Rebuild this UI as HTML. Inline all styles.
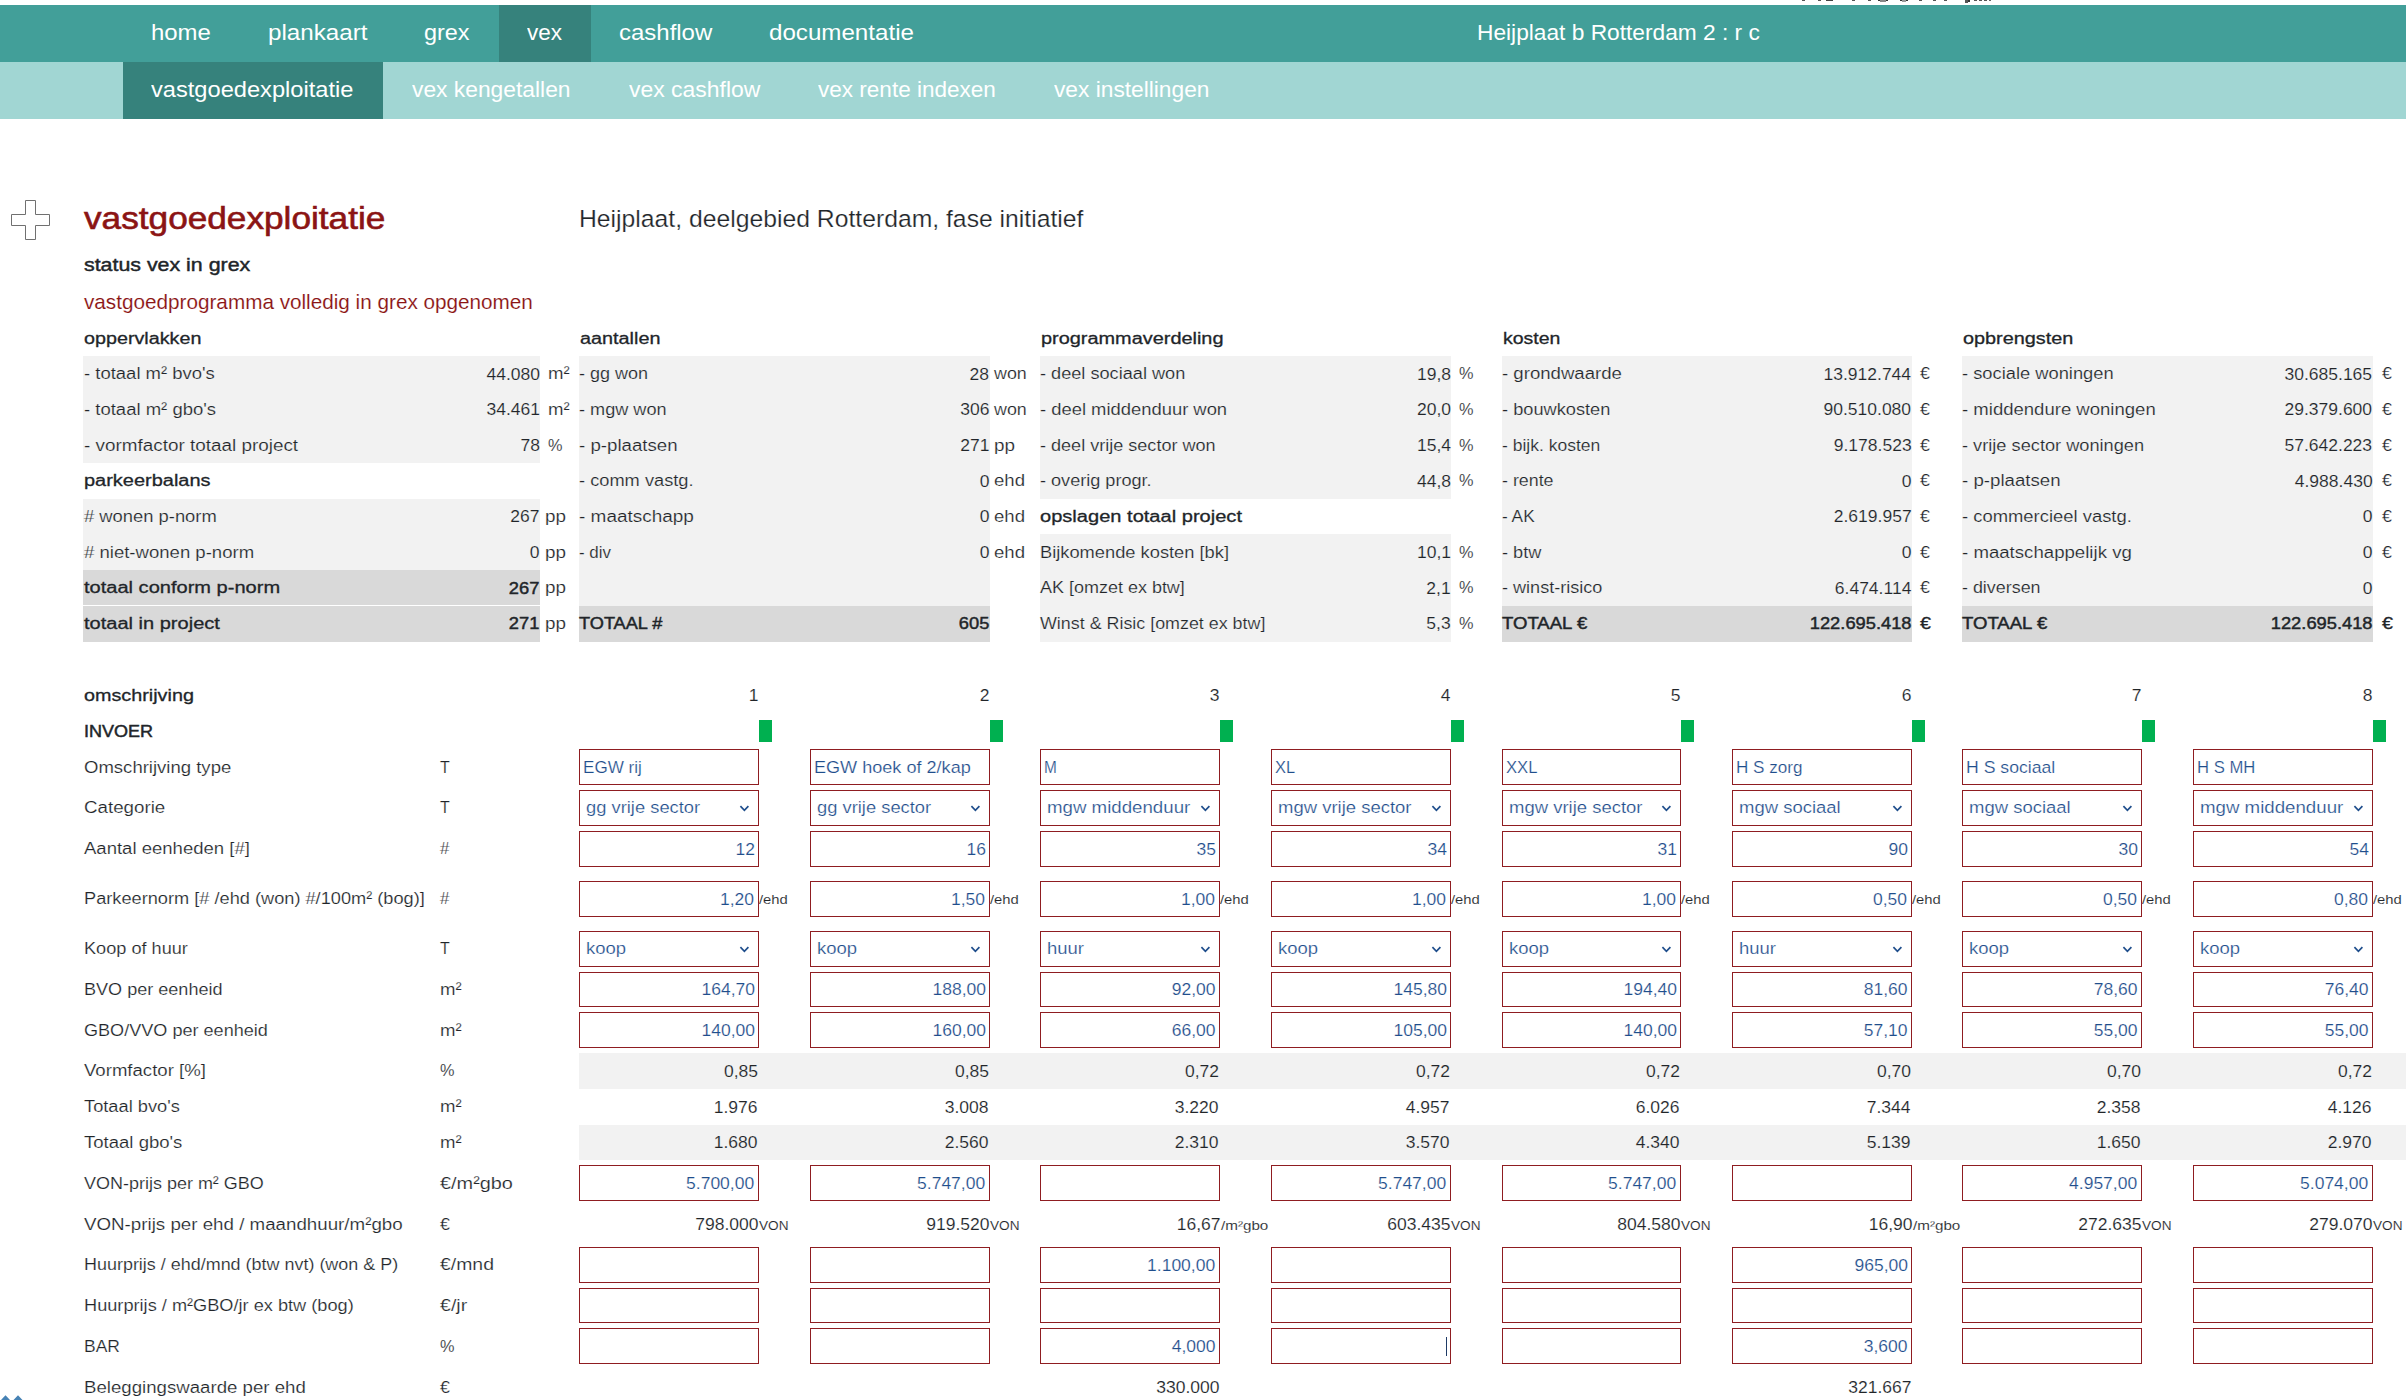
<!DOCTYPE html>
<html lang="nl"><head><meta charset="utf-8"><title>vastgoedexploitatie</title>
<style>
html,body{margin:0;padding:0;background:#fff}
body{width:2406px;height:1400px;position:relative;overflow:hidden;font-family:"Liberation Sans",sans-serif}
#p{position:absolute;left:0;top:0;width:2406px;height:1400px;overflow:hidden}
#p>div,#p>span,#p>svg{position:absolute;box-sizing:content-box}
#p>span{white-space:pre;line-height:1;transform-origin:0 0}
</style></head><body><div id="p">
<div style="left:0px;top:5px;width:2406px;height:57px;background:#429f99;"></div>
<div style="left:499px;top:5px;width:92px;height:57px;background:#36827c;"></div>
<div style="left:0px;top:62px;width:2406px;height:57px;background:#a1d6d3;"></div>
<div style="left:123px;top:62px;width:260px;height:57px;background:#36827c;"></div>
<span style="top:21.20px;font-size:22.7px;color:#fff;left:150.60px;transform:scaleX(1.0549);">home</span>
<span style="top:21.20px;font-size:22.7px;color:#fff;left:267.80px;transform:scaleX(1.0655);">plankaart</span>
<span style="top:21.20px;font-size:22.7px;color:#fff;left:424.40px;transform:scaleX(1.0326);">grex</span>
<span style="top:21.20px;font-size:22.7px;color:#fff;left:527.00px;transform:scaleX(0.9908);">vex</span>
<span style="top:21.20px;font-size:22.7px;color:#fff;left:619.20px;transform:scaleX(1.0564);">cashflow</span>
<span style="top:21.20px;font-size:22.7px;color:#fff;left:769.00px;transform:scaleX(1.0639);">documentatie</span>
<span style="top:21.20px;font-size:22.7px;color:#fff;left:1476.50px;transform:scaleX(1.0014);">Heijplaat b Rotterdam 2 : r c</span>
<span style="top:78.20px;font-size:22.7px;color:#fff;left:151.10px;transform:scaleX(1.0420);">vastgoedexploitatie</span>
<span style="top:78.20px;font-size:22.7px;color:#fff;left:411.70px;transform:scaleX(1.0054);">vex kengetallen</span>
<span style="top:78.20px;font-size:22.7px;color:#fff;left:628.50px;transform:scaleX(1.0119);">vex cashflow</span>
<span style="top:78.20px;font-size:22.7px;color:#fff;left:818.00px;transform:scaleX(0.9933);">vex rente indexen</span>
<span style="top:78.20px;font-size:22.7px;color:#fff;left:1054.00px;transform:scaleX(1.0019);">vex instellingen</span>
<span style="top:203.20px;font-size:31.2px;color:#8b1414;-webkit-text-stroke:0.6px #8b1414;left:84.30px;transform:scaleX(1.1287);">vastgoedexploitatie</span>
<span style="top:207.20px;font-size:24.3px;color:#212529;-webkit-text-stroke:0.22px #fff;left:579.00px;transform:scaleX(1.0177);">Heijplaat, deelgebied Rotterdam, fase initiatief</span>
<span style="top:255.20px;font-size:19.2px;color:#212529;-webkit-text-stroke:0.45px #212529;left:84.00px;transform:scaleX(1.1131);">status vex in grex</span>
<span style="top:292.20px;font-size:20.6px;color:#8b1414;-webkit-text-stroke:0.12px #fff;left:84.10px;transform:scaleX(1.0054);">vastgoedprogramma volledig in grex opgenomen</span>
<svg style="left:0;top:190px" width="60" height="60" viewBox="0 190 60 60"><path d="M25.5 200.5H35.5V214.5H49.5V225.5H35.5V239.5H25.5V225.5H11.5V214.5H25.5Z" fill="#fff" stroke="#707070" stroke-width="1"/></svg>
<div style="left:83px;top:356px;width:457px;height:107px;background:#f2f2f2;"></div>
<div style="left:83px;top:498.67px;width:457px;height:71.33px;background:#f2f2f2;"></div>
<div style="left:83px;top:570px;width:457px;height:35px;background:#d9d9d9;"></div>
<div style="left:83px;top:606px;width:457px;height:36px;background:#d9d9d9;"></div>
<div style="left:579px;top:356px;width:411px;height:250px;background:#f2f2f2;"></div>
<div style="left:579px;top:606px;width:411px;height:36px;background:#d9d9d9;"></div>
<div style="left:1040px;top:356px;width:411px;height:142.67px;background:#f2f2f2;"></div>
<div style="left:1040px;top:534.34px;width:411px;height:107.66px;background:#f2f2f2;"></div>
<div style="left:1502px;top:356px;width:410px;height:250px;background:#f2f2f2;"></div>
<div style="left:1502px;top:606px;width:410px;height:36px;background:#d9d9d9;"></div>
<div style="left:1962px;top:356px;width:411px;height:250px;background:#f2f2f2;"></div>
<div style="left:1962px;top:606px;width:411px;height:36px;background:#d9d9d9;"></div>
<span style="top:330.20px;font-size:17.3px;color:#212529;-webkit-text-stroke:0.3px #212529;left:83.90px;transform:scaleX(1.1418);">oppervlakken</span>
<span style="top:330.20px;font-size:17.3px;color:#212529;-webkit-text-stroke:0.3px #212529;left:579.80px;transform:scaleX(1.1464);">aantallen</span>
<span style="top:330.20px;font-size:17.3px;color:#212529;-webkit-text-stroke:0.3px #212529;left:1040.90px;transform:scaleX(1.1515);">programmaverdeling</span>
<span style="top:330.20px;font-size:17.3px;color:#212529;-webkit-text-stroke:0.3px #212529;left:1502.80px;transform:scaleX(1.1281);">kosten</span>
<span style="top:330.20px;font-size:17.3px;color:#212529;-webkit-text-stroke:0.3px #212529;left:1963.00px;transform:scaleX(1.1488);">opbrengsten</span>
<span style="top:365.20px;font-size:17.3px;color:#212529;-webkit-text-stroke:0.2px #f2f2f2;left:84.20px;transform:scaleX(1.0692);">- totaal m² bvo&#x27;s</span>
<span style="top:366.20px;font-size:17px;color:#212529;-webkit-text-stroke:0.15px #f2f2f2;right:1866.40px;transform-origin:100% 0;transform:scaleX(1.0294);">44.080</span>
<span style="top:365.20px;font-size:17.3px;color:#212529;-webkit-text-stroke:0.2px #fff;left:548.30px;transform:scaleX(1.0757);">m²</span>
<span style="top:401.20px;font-size:17.3px;color:#212529;-webkit-text-stroke:0.2px #f2f2f2;left:84.20px;transform:scaleX(1.0705);">- totaal m² gbo&#x27;s</span>
<span style="top:401.20px;font-size:17px;color:#212529;-webkit-text-stroke:0.15px #f2f2f2;right:1866.40px;transform-origin:100% 0;transform:scaleX(1.0294);">34.461</span>
<span style="top:401.20px;font-size:17.3px;color:#212529;-webkit-text-stroke:0.2px #fff;left:548.30px;transform:scaleX(1.0757);">m²</span>
<span style="top:437.20px;font-size:17.3px;color:#212529;-webkit-text-stroke:0.2px #f2f2f2;left:84.20px;transform:scaleX(1.0926);">- vormfactor totaal project</span>
<span style="top:437.20px;font-size:17px;color:#212529;-webkit-text-stroke:0.15px #f2f2f2;right:1866.40px;transform-origin:100% 0;transform:scaleX(1.0294);">78</span>
<span style="top:437.20px;font-size:17.3px;color:#212529;-webkit-text-stroke:0.2px #fff;left:548.30px;transform:scaleX(0.9426);">%</span>
<span style="top:472.20px;font-size:17.3px;color:#212529;-webkit-text-stroke:0.3px #212529;left:84.20px;transform:scaleX(1.1556);">parkeerbalans</span>
<span style="top:508.20px;font-size:17.3px;color:#212529;-webkit-text-stroke:0.2px #f2f2f2;left:84.20px;transform:scaleX(1.0631);"># wonen p-norm</span>
<span style="top:508.20px;font-size:17px;color:#212529;-webkit-text-stroke:0.15px #f2f2f2;right:1866.40px;transform-origin:100% 0;transform:scaleX(1.0294);">267</span>
<span style="top:508.20px;font-size:17.3px;color:#212529;-webkit-text-stroke:0.2px #fff;left:544.50px;transform:scaleX(1.0913);">pp</span>
<span style="top:544.20px;font-size:17.3px;color:#212529;-webkit-text-stroke:0.2px #f2f2f2;left:84.20px;transform:scaleX(1.0733);"># niet-wonen p-norm</span>
<span style="top:544.20px;font-size:17px;color:#212529;-webkit-text-stroke:0.15px #f2f2f2;right:1866.40px;transform-origin:100% 0;transform:scaleX(1.0294);">0</span>
<span style="top:544.20px;font-size:17.3px;color:#212529;-webkit-text-stroke:0.2px #fff;left:544.50px;transform:scaleX(1.0913);">pp</span>
<span style="top:579.20px;font-size:17.3px;color:#212529;-webkit-text-stroke:0.3px #212529;left:84.20px;transform:scaleX(1.1600);">totaal conform p-norm</span>
<span style="top:580.20px;font-size:17px;color:#212529;-webkit-text-stroke:0.45px #212529;right:1866.40px;transform-origin:100% 0;transform:scaleX(1.0765);">267</span>
<span style="top:579.20px;font-size:17.3px;color:#212529;-webkit-text-stroke:0.2px #fff;left:544.50px;transform:scaleX(1.0913);">pp</span>
<span style="top:615.20px;font-size:17.3px;color:#212529;-webkit-text-stroke:0.3px #212529;left:84.20px;transform:scaleX(1.1592);">totaal in project</span>
<span style="top:615.20px;font-size:17px;color:#212529;-webkit-text-stroke:0.45px #212529;right:1866.40px;transform-origin:100% 0;transform:scaleX(1.0765);">271</span>
<span style="top:615.20px;font-size:17.3px;color:#212529;-webkit-text-stroke:0.2px #fff;left:544.50px;transform:scaleX(1.0913);">pp</span>
<span style="top:365.20px;font-size:17.3px;color:#212529;-webkit-text-stroke:0.2px #f2f2f2;left:579.10px;transform:scaleX(1.0399);">- gg won</span>
<span style="top:366.20px;font-size:17px;color:#212529;-webkit-text-stroke:0.15px #f2f2f2;right:1416.70px;transform-origin:100% 0;transform:scaleX(1.0294);">28</span>
<span style="top:365.20px;font-size:17.3px;color:#212529;-webkit-text-stroke:0.2px #fff;left:994.20px;transform:scaleX(1.0335);">won</span>
<span style="top:401.20px;font-size:17.3px;color:#212529;-webkit-text-stroke:0.2px #f2f2f2;left:579.10px;transform:scaleX(1.0486);">- mgw won</span>
<span style="top:401.20px;font-size:17px;color:#212529;-webkit-text-stroke:0.15px #f2f2f2;right:1416.70px;transform-origin:100% 0;transform:scaleX(1.0294);">306</span>
<span style="top:401.20px;font-size:17.3px;color:#212529;-webkit-text-stroke:0.2px #fff;left:994.20px;transform:scaleX(1.0335);">won</span>
<span style="top:437.20px;font-size:17.3px;color:#212529;-webkit-text-stroke:0.2px #f2f2f2;left:579.10px;transform:scaleX(1.0804);">- p-plaatsen</span>
<span style="top:437.20px;font-size:17px;color:#212529;-webkit-text-stroke:0.15px #f2f2f2;right:1416.70px;transform-origin:100% 0;transform:scaleX(1.0294);">271</span>
<span style="top:437.20px;font-size:17.3px;color:#212529;-webkit-text-stroke:0.2px #fff;left:994.20px;transform:scaleX(1.0913);">pp</span>
<span style="top:472.20px;font-size:17.3px;color:#212529;-webkit-text-stroke:0.2px #f2f2f2;left:579.10px;transform:scaleX(1.0559);">- comm vastg.</span>
<span style="top:473.20px;font-size:17px;color:#212529;-webkit-text-stroke:0.15px #f2f2f2;right:1416.70px;transform-origin:100% 0;transform:scaleX(1.0294);">0</span>
<span style="top:472.20px;font-size:17.3px;color:#212529;-webkit-text-stroke:0.2px #fff;left:994.20px;transform:scaleX(1.0740);">ehd</span>
<span style="top:508.20px;font-size:17.3px;color:#212529;-webkit-text-stroke:0.2px #f2f2f2;left:579.10px;transform:scaleX(1.0972);">- maatschapp</span>
<span style="top:508.20px;font-size:17px;color:#212529;-webkit-text-stroke:0.15px #f2f2f2;right:1416.70px;transform-origin:100% 0;transform:scaleX(1.0294);">0</span>
<span style="top:508.20px;font-size:17.3px;color:#212529;-webkit-text-stroke:0.2px #fff;left:994.20px;transform:scaleX(1.0740);">ehd</span>
<span style="top:544.20px;font-size:17.3px;color:#212529;-webkit-text-stroke:0.2px #f2f2f2;left:579.10px;transform:scaleX(0.9791);">- div</span>
<span style="top:544.20px;font-size:17px;color:#212529;-webkit-text-stroke:0.15px #f2f2f2;right:1416.70px;transform-origin:100% 0;transform:scaleX(1.0294);">0</span>
<span style="top:544.20px;font-size:17.3px;color:#212529;-webkit-text-stroke:0.2px #fff;left:994.20px;transform:scaleX(1.0740);">ehd</span>
<span style="top:615.20px;font-size:16.3px;color:#212529;-webkit-text-stroke:0.45px #212529;left:579.10px;transform:scaleX(1.1150);">TOTAAL #</span>
<span style="top:615.20px;font-size:17px;color:#212529;-webkit-text-stroke:0.45px #212529;right:1416.70px;transform-origin:100% 0;transform:scaleX(1.0765);">605</span>
<span style="top:365.20px;font-size:17.3px;color:#212529;-webkit-text-stroke:0.2px #f2f2f2;left:1040.20px;transform:scaleX(1.0500);">- deel sociaal won</span>
<span style="top:366.20px;font-size:17px;color:#212529;-webkit-text-stroke:0.15px #f2f2f2;right:955.40px;transform-origin:100% 0;transform:scaleX(1.0294);">19,8</span>
<span style="top:365.20px;font-size:17.3px;color:#212529;-webkit-text-stroke:0.2px #fff;left:1459.40px;transform:scaleX(0.9426);">%</span>
<span style="top:401.20px;font-size:17.3px;color:#212529;-webkit-text-stroke:0.2px #f2f2f2;left:1040.20px;transform:scaleX(1.0643);">- deel middenduur won</span>
<span style="top:401.20px;font-size:17px;color:#212529;-webkit-text-stroke:0.15px #f2f2f2;right:955.40px;transform-origin:100% 0;transform:scaleX(1.0294);">20,0</span>
<span style="top:401.20px;font-size:17.3px;color:#212529;-webkit-text-stroke:0.2px #fff;left:1459.40px;transform:scaleX(0.9426);">%</span>
<span style="top:437.20px;font-size:17.3px;color:#212529;-webkit-text-stroke:0.2px #f2f2f2;left:1040.20px;transform:scaleX(1.0448);">- deel vrije sector won</span>
<span style="top:437.20px;font-size:17px;color:#212529;-webkit-text-stroke:0.15px #f2f2f2;right:955.40px;transform-origin:100% 0;transform:scaleX(1.0294);">15,4</span>
<span style="top:437.20px;font-size:17.3px;color:#212529;-webkit-text-stroke:0.2px #fff;left:1459.40px;transform:scaleX(0.9426);">%</span>
<span style="top:472.20px;font-size:17.3px;color:#212529;-webkit-text-stroke:0.2px #f2f2f2;left:1040.20px;transform:scaleX(1.0466);">- overig progr.</span>
<span style="top:473.20px;font-size:17px;color:#212529;-webkit-text-stroke:0.15px #f2f2f2;right:955.40px;transform-origin:100% 0;transform:scaleX(1.0294);">44,8</span>
<span style="top:472.20px;font-size:17.3px;color:#212529;-webkit-text-stroke:0.2px #fff;left:1459.40px;transform:scaleX(0.9426);">%</span>
<span style="top:544.20px;font-size:17.3px;color:#212529;-webkit-text-stroke:0.2px #f2f2f2;left:1040.20px;transform:scaleX(1.0578);">Bijkomende kosten [bk]</span>
<span style="top:544.20px;font-size:17px;color:#212529;-webkit-text-stroke:0.15px #f2f2f2;right:955.40px;transform-origin:100% 0;transform:scaleX(1.0294);">10,1</span>
<span style="top:544.20px;font-size:17.3px;color:#212529;-webkit-text-stroke:0.2px #fff;left:1459.40px;transform:scaleX(0.9426);">%</span>
<span style="top:579.20px;font-size:17.3px;color:#212529;-webkit-text-stroke:0.2px #f2f2f2;left:1040.20px;transform:scaleX(1.0401);">AK [omzet ex btw]</span>
<span style="top:580.20px;font-size:17px;color:#212529;-webkit-text-stroke:0.15px #f2f2f2;right:955.40px;transform-origin:100% 0;transform:scaleX(1.0294);">2,1</span>
<span style="top:579.20px;font-size:17.3px;color:#212529;-webkit-text-stroke:0.2px #fff;left:1459.40px;transform:scaleX(0.9426);">%</span>
<span style="top:615.20px;font-size:17.3px;color:#212529;-webkit-text-stroke:0.2px #f2f2f2;left:1040.20px;transform:scaleX(1.0338);">Winst &amp; Risic [omzet ex btw]</span>
<span style="top:615.20px;font-size:17px;color:#212529;-webkit-text-stroke:0.15px #f2f2f2;right:955.40px;transform-origin:100% 0;transform:scaleX(1.0294);">5,3</span>
<span style="top:615.20px;font-size:17.3px;color:#212529;-webkit-text-stroke:0.2px #fff;left:1459.40px;transform:scaleX(0.9426);">%</span>
<span style="top:508.20px;font-size:17.3px;color:#212529;-webkit-text-stroke:0.3px #212529;left:1040.20px;transform:scaleX(1.1615);">opslagen totaal project</span>
<span style="top:365.20px;font-size:17.3px;color:#212529;-webkit-text-stroke:0.2px #f2f2f2;left:1502.10px;transform:scaleX(1.0757);">- grondwaarde</span>
<span style="top:366.20px;font-size:17px;color:#212529;-webkit-text-stroke:0.15px #f2f2f2;right:494.70px;transform-origin:100% 0;transform:scaleX(1.0294);">13.912.744</span>
<span style="top:365.20px;font-size:17.3px;color:#212529;-webkit-text-stroke:0.2px #fff;left:1920.20px;transform:scaleX(1.0393);">€</span>
<span style="top:401.20px;font-size:17.3px;color:#212529;-webkit-text-stroke:0.2px #f2f2f2;left:1502.10px;transform:scaleX(1.0545);">- bouwkosten</span>
<span style="top:401.20px;font-size:17px;color:#212529;-webkit-text-stroke:0.15px #f2f2f2;right:494.70px;transform-origin:100% 0;transform:scaleX(1.0294);">90.510.080</span>
<span style="top:401.20px;font-size:17.3px;color:#212529;-webkit-text-stroke:0.2px #fff;left:1920.20px;transform:scaleX(1.0393);">€</span>
<span style="top:437.20px;font-size:17.3px;color:#212529;-webkit-text-stroke:0.2px #f2f2f2;left:1502.10px;transform:scaleX(1.0123);">- bijk. kosten</span>
<span style="top:437.20px;font-size:17px;color:#212529;-webkit-text-stroke:0.15px #f2f2f2;right:494.70px;transform-origin:100% 0;transform:scaleX(1.0294);">9.178.523</span>
<span style="top:437.20px;font-size:17.3px;color:#212529;-webkit-text-stroke:0.2px #fff;left:1920.20px;transform:scaleX(1.0393);">€</span>
<span style="top:472.20px;font-size:17.3px;color:#212529;-webkit-text-stroke:0.2px #f2f2f2;left:1502.10px;transform:scaleX(1.0320);">- rente</span>
<span style="top:473.20px;font-size:17px;color:#212529;-webkit-text-stroke:0.15px #f2f2f2;right:494.70px;transform-origin:100% 0;transform:scaleX(1.0294);">0</span>
<span style="top:472.20px;font-size:17.3px;color:#212529;-webkit-text-stroke:0.2px #fff;left:1920.20px;transform:scaleX(1.0393);">€</span>
<span style="top:508.20px;font-size:17.3px;color:#212529;-webkit-text-stroke:0.2px #f2f2f2;left:1502.10px;transform:scaleX(1.0003);">- AK</span>
<span style="top:508.20px;font-size:17px;color:#212529;-webkit-text-stroke:0.15px #f2f2f2;right:494.70px;transform-origin:100% 0;transform:scaleX(1.0294);">2.619.957</span>
<span style="top:508.20px;font-size:17.3px;color:#212529;-webkit-text-stroke:0.2px #fff;left:1920.20px;transform:scaleX(1.0393);">€</span>
<span style="top:544.20px;font-size:17.3px;color:#212529;-webkit-text-stroke:0.2px #f2f2f2;left:1502.10px;transform:scaleX(1.0510);">- btw</span>
<span style="top:544.20px;font-size:17px;color:#212529;-webkit-text-stroke:0.15px #f2f2f2;right:494.70px;transform-origin:100% 0;transform:scaleX(1.0294);">0</span>
<span style="top:544.20px;font-size:17.3px;color:#212529;-webkit-text-stroke:0.2px #fff;left:1920.20px;transform:scaleX(1.0393);">€</span>
<span style="top:579.20px;font-size:17.3px;color:#212529;-webkit-text-stroke:0.2px #f2f2f2;left:1502.10px;transform:scaleX(1.0456);">- winst-risico</span>
<span style="top:580.20px;font-size:17px;color:#212529;-webkit-text-stroke:0.15px #f2f2f2;right:494.70px;transform-origin:100% 0;transform:scaleX(1.0294);">6.474.114</span>
<span style="top:579.20px;font-size:17.3px;color:#212529;-webkit-text-stroke:0.2px #fff;left:1920.20px;transform:scaleX(1.0393);">€</span>
<span style="top:615.20px;font-size:16.3px;color:#212529;-webkit-text-stroke:0.45px #212529;left:1502.10px;transform:scaleX(1.1391);">TOTAAL €</span>
<span style="top:615.20px;font-size:17px;color:#212529;-webkit-text-stroke:0.45px #212529;right:494.70px;transform-origin:100% 0;transform:scaleX(1.0765);">122.695.418</span>
<span style="top:615.20px;font-size:17.3px;color:#212529;-webkit-text-stroke:0.3px #212529;left:1920.20px;transform:scaleX(1.1433);">€</span>
<span style="top:365.20px;font-size:17.3px;color:#212529;-webkit-text-stroke:0.2px #f2f2f2;left:1962.30px;transform:scaleX(1.0594);">- sociale woningen</span>
<span style="top:366.20px;font-size:17px;color:#212529;-webkit-text-stroke:0.15px #f2f2f2;right:33.60px;transform-origin:100% 0;transform:scaleX(1.0294);">30.685.165</span>
<span style="top:365.20px;font-size:17.3px;color:#212529;-webkit-text-stroke:0.2px #fff;left:2381.60px;transform:scaleX(1.0393);">€</span>
<span style="top:401.20px;font-size:17.3px;color:#212529;-webkit-text-stroke:0.2px #f2f2f2;left:1962.30px;transform:scaleX(1.0724);">- middendure woningen</span>
<span style="top:401.20px;font-size:17px;color:#212529;-webkit-text-stroke:0.15px #f2f2f2;right:33.60px;transform-origin:100% 0;transform:scaleX(1.0294);">29.379.600</span>
<span style="top:401.20px;font-size:17.3px;color:#212529;-webkit-text-stroke:0.2px #fff;left:2381.60px;transform:scaleX(1.0393);">€</span>
<span style="top:437.20px;font-size:17.3px;color:#212529;-webkit-text-stroke:0.2px #f2f2f2;left:1962.30px;transform:scaleX(1.0533);">- vrije sector woningen</span>
<span style="top:437.20px;font-size:17px;color:#212529;-webkit-text-stroke:0.15px #f2f2f2;right:33.60px;transform-origin:100% 0;transform:scaleX(1.0294);">57.642.223</span>
<span style="top:437.20px;font-size:17.3px;color:#212529;-webkit-text-stroke:0.2px #fff;left:2381.60px;transform:scaleX(1.0393);">€</span>
<span style="top:472.20px;font-size:17.3px;color:#212529;-webkit-text-stroke:0.2px #f2f2f2;left:1962.30px;transform:scaleX(1.0804);">- p-plaatsen</span>
<span style="top:473.20px;font-size:17px;color:#212529;-webkit-text-stroke:0.15px #f2f2f2;right:33.60px;transform-origin:100% 0;transform:scaleX(1.0294);">4.988.430</span>
<span style="top:472.20px;font-size:17.3px;color:#212529;-webkit-text-stroke:0.2px #fff;left:2381.60px;transform:scaleX(1.0393);">€</span>
<span style="top:508.20px;font-size:17.3px;color:#212529;-webkit-text-stroke:0.2px #f2f2f2;left:1962.30px;transform:scaleX(1.0653);">- commercieel vastg.</span>
<span style="top:508.20px;font-size:17px;color:#212529;-webkit-text-stroke:0.15px #f2f2f2;right:33.60px;transform-origin:100% 0;transform:scaleX(1.0294);">0</span>
<span style="top:508.20px;font-size:17.3px;color:#212529;-webkit-text-stroke:0.2px #fff;left:2381.60px;transform:scaleX(1.0393);">€</span>
<span style="top:544.20px;font-size:17.3px;color:#212529;-webkit-text-stroke:0.2px #f2f2f2;left:1962.30px;transform:scaleX(1.0780);">- maatschappelijk vg</span>
<span style="top:544.20px;font-size:17px;color:#212529;-webkit-text-stroke:0.15px #f2f2f2;right:33.60px;transform-origin:100% 0;transform:scaleX(1.0294);">0</span>
<span style="top:544.20px;font-size:17.3px;color:#212529;-webkit-text-stroke:0.2px #fff;left:2381.60px;transform:scaleX(1.0393);">€</span>
<span style="top:579.20px;font-size:17.3px;color:#212529;-webkit-text-stroke:0.2px #f2f2f2;left:1962.30px;transform:scaleX(1.0348);">- diversen</span>
<span style="top:580.20px;font-size:17px;color:#212529;-webkit-text-stroke:0.15px #f2f2f2;right:33.60px;transform-origin:100% 0;transform:scaleX(1.0294);">0</span>
<span style="top:615.20px;font-size:16.3px;color:#212529;-webkit-text-stroke:0.45px #212529;left:1962.30px;transform:scaleX(1.1391);">TOTAAL €</span>
<span style="top:615.20px;font-size:17px;color:#212529;-webkit-text-stroke:0.45px #212529;right:33.60px;transform-origin:100% 0;transform:scaleX(1.0765);">122.695.418</span>
<span style="top:615.20px;font-size:17.3px;color:#212529;-webkit-text-stroke:0.3px #212529;left:2381.60px;transform:scaleX(1.1433);">€</span>
<div style="left:579px;top:1053px;width:1827px;height:36px;background:#f2f2f2;"></div>
<div style="left:579px;top:1125px;width:1827px;height:35px;background:#f2f2f2;"></div>
<span style="top:687.20px;font-size:17.3px;color:#212529;-webkit-text-stroke:0.3px #212529;left:84.00px;transform:scaleX(1.1442);">omschrijving</span>
<span style="top:723.20px;font-size:16.3px;color:#212529;-webkit-text-stroke:0.45px #212529;left:84.00px;transform:scaleX(1.1073);">INVOER</span>
<span style="top:687.20px;font-size:17px;color:#212529;-webkit-text-stroke:0.15px #fff;right:1647.30px;transform-origin:100% 0;transform:scaleX(1.0294);">1</span>
<div style="left:759px;top:720px;width:13px;height:22px;background:#00b050;"></div>
<span style="top:687.20px;font-size:17px;color:#212529;-webkit-text-stroke:0.15px #fff;right:1416.30px;transform-origin:100% 0;transform:scaleX(1.0294);">2</span>
<div style="left:990px;top:720px;width:13px;height:22px;background:#00b050;"></div>
<span style="top:687.20px;font-size:17px;color:#212529;-webkit-text-stroke:0.15px #fff;right:1186.30px;transform-origin:100% 0;transform:scaleX(1.0294);">3</span>
<div style="left:1220px;top:720px;width:13px;height:22px;background:#00b050;"></div>
<span style="top:687.20px;font-size:17px;color:#212529;-webkit-text-stroke:0.15px #fff;right:955.30px;transform-origin:100% 0;transform:scaleX(1.0294);">4</span>
<div style="left:1451px;top:720px;width:13px;height:22px;background:#00b050;"></div>
<span style="top:687.20px;font-size:17px;color:#212529;-webkit-text-stroke:0.15px #fff;right:725.30px;transform-origin:100% 0;transform:scaleX(1.0294);">5</span>
<div style="left:1681px;top:720px;width:13px;height:22px;background:#00b050;"></div>
<span style="top:687.20px;font-size:17px;color:#212529;-webkit-text-stroke:0.15px #fff;right:494.30px;transform-origin:100% 0;transform:scaleX(1.0294);">6</span>
<div style="left:1912px;top:720px;width:13px;height:22px;background:#00b050;"></div>
<span style="top:687.20px;font-size:17px;color:#212529;-webkit-text-stroke:0.15px #fff;right:264.30px;transform-origin:100% 0;transform:scaleX(1.0294);">7</span>
<div style="left:2142px;top:720px;width:13px;height:22px;background:#00b050;"></div>
<span style="top:687.20px;font-size:17px;color:#212529;-webkit-text-stroke:0.15px #fff;right:33.30px;transform-origin:100% 0;transform:scaleX(1.0294);">8</span>
<div style="left:2373px;top:720px;width:13px;height:22px;background:#00b050;"></div>
<span style="top:759.20px;font-size:17.3px;color:#212529;-webkit-text-stroke:0.2px #fff;left:83.90px;transform:scaleX(1.0722);">Omschrijving type</span>
<span style="top:759.20px;font-size:17.3px;color:#212529;-webkit-text-stroke:0.2px #fff;left:440.00px;transform:scaleX(0.9274);">T</span>
<div style="left:579px;top:749px;width:178px;height:34px;border:1px solid #8f1d21;background:#fff"></div>
<span style="top:760.20px;font-size:16.6px;color:#1f4e8c;-webkit-text-stroke:0.2px #fff;left:583.00px;transform:scaleX(1.0303);">EGW rij</span>
<div style="left:810px;top:749px;width:178px;height:34px;border:1px solid #8f1d21;background:#fff"></div>
<span style="top:760.20px;font-size:16.6px;color:#1f4e8c;-webkit-text-stroke:0.2px #fff;left:814.00px;transform:scaleX(1.0894);">EGW hoek of 2/kap</span>
<div style="left:1040px;top:749px;width:178px;height:34px;border:1px solid #8f1d21;background:#fff"></div>
<span style="top:760.20px;font-size:16.6px;color:#1f4e8c;-webkit-text-stroke:0.2px #fff;left:1044.00px;transform:scaleX(0.9257);">M</span>
<div style="left:1271px;top:749px;width:178px;height:34px;border:1px solid #8f1d21;background:#fff"></div>
<span style="top:760.20px;font-size:16.6px;color:#1f4e8c;-webkit-text-stroke:0.2px #fff;left:1275.00px;transform:scaleX(0.9899);">XL</span>
<div style="left:1502px;top:749px;width:177px;height:34px;border:1px solid #8f1d21;background:#fff"></div>
<span style="top:760.20px;font-size:16.6px;color:#1f4e8c;-webkit-text-stroke:0.2px #fff;left:1506.00px;transform:scaleX(1.0039);">XXL</span>
<div style="left:1732px;top:749px;width:178px;height:34px;border:1px solid #8f1d21;background:#fff"></div>
<span style="top:760.20px;font-size:16.6px;color:#1f4e8c;-webkit-text-stroke:0.2px #fff;left:1736.00px;transform:scaleX(1.0298);">H S zorg</span>
<div style="left:1962px;top:749px;width:178px;height:34px;border:1px solid #8f1d21;background:#fff"></div>
<span style="top:760.20px;font-size:16.6px;color:#1f4e8c;-webkit-text-stroke:0.2px #fff;left:1966.00px;transform:scaleX(1.0636);">H S sociaal</span>
<div style="left:2193px;top:749px;width:178px;height:34px;border:1px solid #8f1d21;background:#fff"></div>
<span style="top:760.20px;font-size:16.6px;color:#1f4e8c;-webkit-text-stroke:0.2px #fff;left:2197.00px;transform:scaleX(1.0034);">H S MH</span>
<span style="top:799.20px;font-size:17.3px;color:#212529;-webkit-text-stroke:0.2px #fff;left:83.90px;transform:scaleX(1.0838);">Categorie</span>
<span style="top:799.20px;font-size:17.3px;color:#212529;-webkit-text-stroke:0.2px #fff;left:440.00px;transform:scaleX(0.9274);">T</span>
<div style="left:579px;top:790px;width:178px;height:34px;border:1px solid #8f1d21;background:#fff"></div>
<span style="top:800.20px;font-size:16.8px;color:#1f4e8c;-webkit-text-stroke:0.22px #fff;left:585.50px;transform:scaleX(1.0930);">gg vrije sector</span>
<svg style="left:738.5px;top:804.6px" width="11" height="8" viewBox="0 0 11 8"><path d="M1.4 1.2 L5.4 5.3 L9.4 1.2" fill="none" stroke="#1f4e8c" stroke-width="1.7"/></svg>
<div style="left:810px;top:790px;width:178px;height:34px;border:1px solid #8f1d21;background:#fff"></div>
<span style="top:800.20px;font-size:16.8px;color:#1f4e8c;-webkit-text-stroke:0.22px #fff;left:816.50px;transform:scaleX(1.0930);">gg vrije sector</span>
<svg style="left:969.5px;top:804.6px" width="11" height="8" viewBox="0 0 11 8"><path d="M1.4 1.2 L5.4 5.3 L9.4 1.2" fill="none" stroke="#1f4e8c" stroke-width="1.7"/></svg>
<div style="left:1040px;top:790px;width:178px;height:34px;border:1px solid #8f1d21;background:#fff"></div>
<span style="top:800.20px;font-size:16.8px;color:#1f4e8c;-webkit-text-stroke:0.22px #fff;left:1046.50px;transform:scaleX(1.1128);">mgw middenduur</span>
<svg style="left:1199.5px;top:804.6px" width="11" height="8" viewBox="0 0 11 8"><path d="M1.4 1.2 L5.4 5.3 L9.4 1.2" fill="none" stroke="#1f4e8c" stroke-width="1.7"/></svg>
<div style="left:1271px;top:790px;width:178px;height:34px;border:1px solid #8f1d21;background:#fff"></div>
<span style="top:800.20px;font-size:16.8px;color:#1f4e8c;-webkit-text-stroke:0.22px #fff;left:1277.50px;transform:scaleX(1.1012);">mgw vrije sector</span>
<svg style="left:1430.5px;top:804.6px" width="11" height="8" viewBox="0 0 11 8"><path d="M1.4 1.2 L5.4 5.3 L9.4 1.2" fill="none" stroke="#1f4e8c" stroke-width="1.7"/></svg>
<div style="left:1502px;top:790px;width:177px;height:34px;border:1px solid #8f1d21;background:#fff"></div>
<span style="top:800.20px;font-size:16.8px;color:#1f4e8c;-webkit-text-stroke:0.22px #fff;left:1508.50px;transform:scaleX(1.1012);">mgw vrije sector</span>
<svg style="left:1660.5px;top:804.6px" width="11" height="8" viewBox="0 0 11 8"><path d="M1.4 1.2 L5.4 5.3 L9.4 1.2" fill="none" stroke="#1f4e8c" stroke-width="1.7"/></svg>
<div style="left:1732px;top:790px;width:178px;height:34px;border:1px solid #8f1d21;background:#fff"></div>
<span style="top:800.20px;font-size:16.8px;color:#1f4e8c;-webkit-text-stroke:0.22px #fff;left:1738.50px;transform:scaleX(1.1012);">mgw sociaal</span>
<svg style="left:1891.5px;top:804.6px" width="11" height="8" viewBox="0 0 11 8"><path d="M1.4 1.2 L5.4 5.3 L9.4 1.2" fill="none" stroke="#1f4e8c" stroke-width="1.7"/></svg>
<div style="left:1962px;top:790px;width:178px;height:34px;border:1px solid #8f1d21;background:#fff"></div>
<span style="top:800.20px;font-size:16.8px;color:#1f4e8c;-webkit-text-stroke:0.22px #fff;left:1968.50px;transform:scaleX(1.1012);">mgw sociaal</span>
<svg style="left:2121.5px;top:804.6px" width="11" height="8" viewBox="0 0 11 8"><path d="M1.4 1.2 L5.4 5.3 L9.4 1.2" fill="none" stroke="#1f4e8c" stroke-width="1.7"/></svg>
<div style="left:2193px;top:790px;width:178px;height:34px;border:1px solid #8f1d21;background:#fff"></div>
<span style="top:800.20px;font-size:16.8px;color:#1f4e8c;-webkit-text-stroke:0.22px #fff;left:2199.50px;transform:scaleX(1.1128);">mgw middenduur</span>
<svg style="left:2352.5px;top:804.6px" width="11" height="8" viewBox="0 0 11 8"><path d="M1.4 1.2 L5.4 5.3 L9.4 1.2" fill="none" stroke="#1f4e8c" stroke-width="1.7"/></svg>
<span style="top:840.20px;font-size:17.3px;color:#212529;-webkit-text-stroke:0.2px #fff;left:83.90px;transform:scaleX(1.0719);">Aantal eenheden [#]</span>
<span style="top:840.20px;font-size:17.3px;color:#212529;-webkit-text-stroke:0.2px #fff;left:440.00px;transform:scaleX(0.9666);">#</span>
<div style="left:579px;top:831px;width:178px;height:34px;border:1px solid #8f1d21;background:#fff"></div>
<span style="top:841.20px;font-size:17px;color:#1f4e8c;-webkit-text-stroke:0.18px #fff;right:1651.50px;transform-origin:100% 0;transform:scaleX(1.0294);">12</span>
<div style="left:810px;top:831px;width:178px;height:34px;border:1px solid #8f1d21;background:#fff"></div>
<span style="top:841.20px;font-size:17px;color:#1f4e8c;-webkit-text-stroke:0.18px #fff;right:1420.50px;transform-origin:100% 0;transform:scaleX(1.0294);">16</span>
<div style="left:1040px;top:831px;width:178px;height:34px;border:1px solid #8f1d21;background:#fff"></div>
<span style="top:841.20px;font-size:17px;color:#1f4e8c;-webkit-text-stroke:0.18px #fff;right:1190.50px;transform-origin:100% 0;transform:scaleX(1.0294);">35</span>
<div style="left:1271px;top:831px;width:178px;height:34px;border:1px solid #8f1d21;background:#fff"></div>
<span style="top:841.20px;font-size:17px;color:#1f4e8c;-webkit-text-stroke:0.18px #fff;right:959.50px;transform-origin:100% 0;transform:scaleX(1.0294);">34</span>
<div style="left:1502px;top:831px;width:177px;height:34px;border:1px solid #8f1d21;background:#fff"></div>
<span style="top:841.20px;font-size:17px;color:#1f4e8c;-webkit-text-stroke:0.18px #fff;right:729.50px;transform-origin:100% 0;transform:scaleX(1.0294);">31</span>
<div style="left:1732px;top:831px;width:178px;height:34px;border:1px solid #8f1d21;background:#fff"></div>
<span style="top:841.20px;font-size:17px;color:#1f4e8c;-webkit-text-stroke:0.18px #fff;right:498.50px;transform-origin:100% 0;transform:scaleX(1.0294);">90</span>
<div style="left:1962px;top:831px;width:178px;height:34px;border:1px solid #8f1d21;background:#fff"></div>
<span style="top:841.20px;font-size:17px;color:#1f4e8c;-webkit-text-stroke:0.18px #fff;right:268.50px;transform-origin:100% 0;transform:scaleX(1.0294);">30</span>
<div style="left:2193px;top:831px;width:178px;height:34px;border:1px solid #8f1d21;background:#fff"></div>
<span style="top:841.20px;font-size:17px;color:#1f4e8c;-webkit-text-stroke:0.18px #fff;right:37.50px;transform-origin:100% 0;transform:scaleX(1.0294);">54</span>
<span style="top:890.20px;font-size:17.3px;color:#212529;-webkit-text-stroke:0.2px #fff;left:83.90px;transform:scaleX(1.0530);">Parkeernorm [# /ehd (won) #/100m² (bog)]</span>
<span style="top:890.20px;font-size:17.3px;color:#212529;-webkit-text-stroke:0.2px #fff;left:440.00px;transform:scaleX(0.9666);">#</span>
<div style="left:579px;top:881px;width:178px;height:34px;border:1px solid #8f1d21;background:#fff"></div>
<span style="top:891.20px;font-size:17px;color:#1f4e8c;-webkit-text-stroke:0.18px #fff;right:1651.50px;transform-origin:100% 0;transform:scaleX(1.0294);">1,20</span>
<span style="top:893.20px;font-size:13.5px;color:#212529;-webkit-text-stroke:0.12px #fff;left:759.20px;transform:scaleX(1.0961);">/ehd</span>
<div style="left:810px;top:881px;width:178px;height:34px;border:1px solid #8f1d21;background:#fff"></div>
<span style="top:891.20px;font-size:17px;color:#1f4e8c;-webkit-text-stroke:0.18px #fff;right:1420.50px;transform-origin:100% 0;transform:scaleX(1.0294);">1,50</span>
<span style="top:893.20px;font-size:13.5px;color:#212529;-webkit-text-stroke:0.12px #fff;left:990.20px;transform:scaleX(1.0961);">/ehd</span>
<div style="left:1040px;top:881px;width:178px;height:34px;border:1px solid #8f1d21;background:#fff"></div>
<span style="top:891.20px;font-size:17px;color:#1f4e8c;-webkit-text-stroke:0.18px #fff;right:1190.50px;transform-origin:100% 0;transform:scaleX(1.0294);">1,00</span>
<span style="top:893.20px;font-size:13.5px;color:#212529;-webkit-text-stroke:0.12px #fff;left:1220.20px;transform:scaleX(1.0961);">/ehd</span>
<div style="left:1271px;top:881px;width:178px;height:34px;border:1px solid #8f1d21;background:#fff"></div>
<span style="top:891.20px;font-size:17px;color:#1f4e8c;-webkit-text-stroke:0.18px #fff;right:959.50px;transform-origin:100% 0;transform:scaleX(1.0294);">1,00</span>
<span style="top:893.20px;font-size:13.5px;color:#212529;-webkit-text-stroke:0.12px #fff;left:1451.20px;transform:scaleX(1.0961);">/ehd</span>
<div style="left:1502px;top:881px;width:177px;height:34px;border:1px solid #8f1d21;background:#fff"></div>
<span style="top:891.20px;font-size:17px;color:#1f4e8c;-webkit-text-stroke:0.18px #fff;right:729.50px;transform-origin:100% 0;transform:scaleX(1.0294);">1,00</span>
<span style="top:893.20px;font-size:13.5px;color:#212529;-webkit-text-stroke:0.12px #fff;left:1681.20px;transform:scaleX(1.0961);">/ehd</span>
<div style="left:1732px;top:881px;width:178px;height:34px;border:1px solid #8f1d21;background:#fff"></div>
<span style="top:891.20px;font-size:17px;color:#1f4e8c;-webkit-text-stroke:0.18px #fff;right:498.50px;transform-origin:100% 0;transform:scaleX(1.0294);">0,50</span>
<span style="top:893.20px;font-size:13.5px;color:#212529;-webkit-text-stroke:0.12px #fff;left:1912.20px;transform:scaleX(1.0961);">/ehd</span>
<div style="left:1962px;top:881px;width:178px;height:34px;border:1px solid #8f1d21;background:#fff"></div>
<span style="top:891.20px;font-size:17px;color:#1f4e8c;-webkit-text-stroke:0.18px #fff;right:268.50px;transform-origin:100% 0;transform:scaleX(1.0294);">0,50</span>
<span style="top:893.20px;font-size:13.5px;color:#212529;-webkit-text-stroke:0.12px #fff;left:2142.20px;transform:scaleX(1.0961);">/ehd</span>
<div style="left:2193px;top:881px;width:178px;height:34px;border:1px solid #8f1d21;background:#fff"></div>
<span style="top:891.20px;font-size:17px;color:#1f4e8c;-webkit-text-stroke:0.18px #fff;right:37.50px;transform-origin:100% 0;transform:scaleX(1.0294);">0,80</span>
<span style="top:893.20px;font-size:13.5px;color:#212529;-webkit-text-stroke:0.12px #fff;left:2373.20px;transform:scaleX(1.0961);">/ehd</span>
<span style="top:940.20px;font-size:17.3px;color:#212529;-webkit-text-stroke:0.2px #fff;left:83.90px;transform:scaleX(1.0498);">Koop of huur</span>
<span style="top:940.20px;font-size:17.3px;color:#212529;-webkit-text-stroke:0.2px #fff;left:440.00px;transform:scaleX(0.9274);">T</span>
<div style="left:579px;top:931px;width:178px;height:34px;border:1px solid #8f1d21;background:#fff"></div>
<span style="top:941.20px;font-size:16.8px;color:#1f4e8c;-webkit-text-stroke:0.22px #fff;left:585.50px;transform:scaleX(1.1012);">koop</span>
<svg style="left:738.5px;top:945.6px" width="11" height="8" viewBox="0 0 11 8"><path d="M1.4 1.2 L5.4 5.3 L9.4 1.2" fill="none" stroke="#1f4e8c" stroke-width="1.7"/></svg>
<div style="left:810px;top:931px;width:178px;height:34px;border:1px solid #8f1d21;background:#fff"></div>
<span style="top:941.20px;font-size:16.8px;color:#1f4e8c;-webkit-text-stroke:0.22px #fff;left:816.50px;transform:scaleX(1.1012);">koop</span>
<svg style="left:969.5px;top:945.6px" width="11" height="8" viewBox="0 0 11 8"><path d="M1.4 1.2 L5.4 5.3 L9.4 1.2" fill="none" stroke="#1f4e8c" stroke-width="1.7"/></svg>
<div style="left:1040px;top:931px;width:178px;height:34px;border:1px solid #8f1d21;background:#fff"></div>
<span style="top:941.20px;font-size:16.8px;color:#1f4e8c;-webkit-text-stroke:0.22px #fff;left:1046.50px;transform:scaleX(1.1012);">huur</span>
<svg style="left:1199.5px;top:945.6px" width="11" height="8" viewBox="0 0 11 8"><path d="M1.4 1.2 L5.4 5.3 L9.4 1.2" fill="none" stroke="#1f4e8c" stroke-width="1.7"/></svg>
<div style="left:1271px;top:931px;width:178px;height:34px;border:1px solid #8f1d21;background:#fff"></div>
<span style="top:941.20px;font-size:16.8px;color:#1f4e8c;-webkit-text-stroke:0.22px #fff;left:1277.50px;transform:scaleX(1.1012);">koop</span>
<svg style="left:1430.5px;top:945.6px" width="11" height="8" viewBox="0 0 11 8"><path d="M1.4 1.2 L5.4 5.3 L9.4 1.2" fill="none" stroke="#1f4e8c" stroke-width="1.7"/></svg>
<div style="left:1502px;top:931px;width:177px;height:34px;border:1px solid #8f1d21;background:#fff"></div>
<span style="top:941.20px;font-size:16.8px;color:#1f4e8c;-webkit-text-stroke:0.22px #fff;left:1508.50px;transform:scaleX(1.1012);">koop</span>
<svg style="left:1660.5px;top:945.6px" width="11" height="8" viewBox="0 0 11 8"><path d="M1.4 1.2 L5.4 5.3 L9.4 1.2" fill="none" stroke="#1f4e8c" stroke-width="1.7"/></svg>
<div style="left:1732px;top:931px;width:178px;height:34px;border:1px solid #8f1d21;background:#fff"></div>
<span style="top:941.20px;font-size:16.8px;color:#1f4e8c;-webkit-text-stroke:0.22px #fff;left:1738.50px;transform:scaleX(1.1012);">huur</span>
<svg style="left:1891.5px;top:945.6px" width="11" height="8" viewBox="0 0 11 8"><path d="M1.4 1.2 L5.4 5.3 L9.4 1.2" fill="none" stroke="#1f4e8c" stroke-width="1.7"/></svg>
<div style="left:1962px;top:931px;width:178px;height:34px;border:1px solid #8f1d21;background:#fff"></div>
<span style="top:941.20px;font-size:16.8px;color:#1f4e8c;-webkit-text-stroke:0.22px #fff;left:1968.50px;transform:scaleX(1.1012);">koop</span>
<svg style="left:2121.5px;top:945.6px" width="11" height="8" viewBox="0 0 11 8"><path d="M1.4 1.2 L5.4 5.3 L9.4 1.2" fill="none" stroke="#1f4e8c" stroke-width="1.7"/></svg>
<div style="left:2193px;top:931px;width:178px;height:34px;border:1px solid #8f1d21;background:#fff"></div>
<span style="top:941.20px;font-size:16.8px;color:#1f4e8c;-webkit-text-stroke:0.22px #fff;left:2199.50px;transform:scaleX(1.1012);">koop</span>
<svg style="left:2352.5px;top:945.6px" width="11" height="8" viewBox="0 0 11 8"><path d="M1.4 1.2 L5.4 5.3 L9.4 1.2" fill="none" stroke="#1f4e8c" stroke-width="1.7"/></svg>
<span style="top:981.20px;font-size:17.3px;color:#212529;-webkit-text-stroke:0.2px #fff;left:83.90px;transform:scaleX(1.0450);">BVO per eenheid</span>
<span style="top:981.20px;font-size:17.3px;color:#212529;-webkit-text-stroke:0.2px #fff;left:440.00px;transform:scaleX(1.0757);">m²</span>
<div style="left:579px;top:972px;width:178px;height:33px;border:1px solid #8f1d21;background:#fff"></div>
<span style="top:981.20px;font-size:17px;color:#1f4e8c;-webkit-text-stroke:0.18px #fff;right:1651.50px;transform-origin:100% 0;transform:scaleX(1.0294);">164,70</span>
<div style="left:810px;top:972px;width:178px;height:33px;border:1px solid #8f1d21;background:#fff"></div>
<span style="top:981.20px;font-size:17px;color:#1f4e8c;-webkit-text-stroke:0.18px #fff;right:1420.50px;transform-origin:100% 0;transform:scaleX(1.0294);">188,00</span>
<div style="left:1040px;top:972px;width:178px;height:33px;border:1px solid #8f1d21;background:#fff"></div>
<span style="top:981.20px;font-size:17px;color:#1f4e8c;-webkit-text-stroke:0.18px #fff;right:1190.50px;transform-origin:100% 0;transform:scaleX(1.0294);">92,00</span>
<div style="left:1271px;top:972px;width:178px;height:33px;border:1px solid #8f1d21;background:#fff"></div>
<span style="top:981.20px;font-size:17px;color:#1f4e8c;-webkit-text-stroke:0.18px #fff;right:959.50px;transform-origin:100% 0;transform:scaleX(1.0294);">145,80</span>
<div style="left:1502px;top:972px;width:177px;height:33px;border:1px solid #8f1d21;background:#fff"></div>
<span style="top:981.20px;font-size:17px;color:#1f4e8c;-webkit-text-stroke:0.18px #fff;right:729.50px;transform-origin:100% 0;transform:scaleX(1.0294);">194,40</span>
<div style="left:1732px;top:972px;width:178px;height:33px;border:1px solid #8f1d21;background:#fff"></div>
<span style="top:981.20px;font-size:17px;color:#1f4e8c;-webkit-text-stroke:0.18px #fff;right:498.50px;transform-origin:100% 0;transform:scaleX(1.0294);">81,60</span>
<div style="left:1962px;top:972px;width:178px;height:33px;border:1px solid #8f1d21;background:#fff"></div>
<span style="top:981.20px;font-size:17px;color:#1f4e8c;-webkit-text-stroke:0.18px #fff;right:268.50px;transform-origin:100% 0;transform:scaleX(1.0294);">78,60</span>
<div style="left:2193px;top:972px;width:178px;height:33px;border:1px solid #8f1d21;background:#fff"></div>
<span style="top:981.20px;font-size:17px;color:#1f4e8c;-webkit-text-stroke:0.18px #fff;right:37.50px;transform-origin:100% 0;transform:scaleX(1.0294);">76,40</span>
<span style="top:1022.20px;font-size:17.3px;color:#212529;-webkit-text-stroke:0.2px #fff;left:83.90px;transform:scaleX(1.0461);">GBO/VVO per eenheid</span>
<span style="top:1022.20px;font-size:17.3px;color:#212529;-webkit-text-stroke:0.2px #fff;left:440.00px;transform:scaleX(1.0757);">m²</span>
<div style="left:579px;top:1012px;width:178px;height:34px;border:1px solid #8f1d21;background:#fff"></div>
<span style="top:1022.20px;font-size:17px;color:#1f4e8c;-webkit-text-stroke:0.18px #fff;right:1651.50px;transform-origin:100% 0;transform:scaleX(1.0294);">140,00</span>
<div style="left:810px;top:1012px;width:178px;height:34px;border:1px solid #8f1d21;background:#fff"></div>
<span style="top:1022.20px;font-size:17px;color:#1f4e8c;-webkit-text-stroke:0.18px #fff;right:1420.50px;transform-origin:100% 0;transform:scaleX(1.0294);">160,00</span>
<div style="left:1040px;top:1012px;width:178px;height:34px;border:1px solid #8f1d21;background:#fff"></div>
<span style="top:1022.20px;font-size:17px;color:#1f4e8c;-webkit-text-stroke:0.18px #fff;right:1190.50px;transform-origin:100% 0;transform:scaleX(1.0294);">66,00</span>
<div style="left:1271px;top:1012px;width:178px;height:34px;border:1px solid #8f1d21;background:#fff"></div>
<span style="top:1022.20px;font-size:17px;color:#1f4e8c;-webkit-text-stroke:0.18px #fff;right:959.50px;transform-origin:100% 0;transform:scaleX(1.0294);">105,00</span>
<div style="left:1502px;top:1012px;width:177px;height:34px;border:1px solid #8f1d21;background:#fff"></div>
<span style="top:1022.20px;font-size:17px;color:#1f4e8c;-webkit-text-stroke:0.18px #fff;right:729.50px;transform-origin:100% 0;transform:scaleX(1.0294);">140,00</span>
<div style="left:1732px;top:1012px;width:178px;height:34px;border:1px solid #8f1d21;background:#fff"></div>
<span style="top:1022.20px;font-size:17px;color:#1f4e8c;-webkit-text-stroke:0.18px #fff;right:498.50px;transform-origin:100% 0;transform:scaleX(1.0294);">57,10</span>
<div style="left:1962px;top:1012px;width:178px;height:34px;border:1px solid #8f1d21;background:#fff"></div>
<span style="top:1022.20px;font-size:17px;color:#1f4e8c;-webkit-text-stroke:0.18px #fff;right:268.50px;transform-origin:100% 0;transform:scaleX(1.0294);">55,00</span>
<div style="left:2193px;top:1012px;width:178px;height:34px;border:1px solid #8f1d21;background:#fff"></div>
<span style="top:1022.20px;font-size:17px;color:#1f4e8c;-webkit-text-stroke:0.18px #fff;right:37.50px;transform-origin:100% 0;transform:scaleX(1.0294);">55,00</span>
<span style="top:1062.20px;font-size:17.3px;color:#212529;-webkit-text-stroke:0.2px #fff;left:83.90px;transform:scaleX(1.0754);">Vormfactor [%]</span>
<span style="top:1062.20px;font-size:17.3px;color:#212529;-webkit-text-stroke:0.2px #fff;left:440.00px;transform:scaleX(0.9426);">%</span>
<span style="top:1063.20px;font-size:17px;color:#212529;-webkit-text-stroke:0.15px #f2f2f2;right:1648.00px;transform-origin:100% 0;transform:scaleX(1.0294);">0,85</span>
<span style="top:1063.20px;font-size:17px;color:#212529;-webkit-text-stroke:0.15px #f2f2f2;right:1417.00px;transform-origin:100% 0;transform:scaleX(1.0294);">0,85</span>
<span style="top:1063.20px;font-size:17px;color:#212529;-webkit-text-stroke:0.15px #f2f2f2;right:1187.00px;transform-origin:100% 0;transform:scaleX(1.0294);">0,72</span>
<span style="top:1063.20px;font-size:17px;color:#212529;-webkit-text-stroke:0.15px #f2f2f2;right:956.00px;transform-origin:100% 0;transform:scaleX(1.0294);">0,72</span>
<span style="top:1063.20px;font-size:17px;color:#212529;-webkit-text-stroke:0.15px #f2f2f2;right:726.00px;transform-origin:100% 0;transform:scaleX(1.0294);">0,72</span>
<span style="top:1063.20px;font-size:17px;color:#212529;-webkit-text-stroke:0.15px #f2f2f2;right:495.00px;transform-origin:100% 0;transform:scaleX(1.0294);">0,70</span>
<span style="top:1063.20px;font-size:17px;color:#212529;-webkit-text-stroke:0.15px #f2f2f2;right:265.00px;transform-origin:100% 0;transform:scaleX(1.0294);">0,70</span>
<span style="top:1063.20px;font-size:17px;color:#212529;-webkit-text-stroke:0.15px #f2f2f2;right:34.00px;transform-origin:100% 0;transform:scaleX(1.0294);">0,72</span>
<span style="top:1098.20px;font-size:17.3px;color:#212529;-webkit-text-stroke:0.2px #fff;left:83.90px;transform:scaleX(1.0571);">Totaal bvo&#x27;s</span>
<span style="top:1098.20px;font-size:17.3px;color:#212529;-webkit-text-stroke:0.2px #fff;left:440.00px;transform:scaleX(1.0757);">m²</span>
<span style="top:1099.20px;font-size:17px;color:#212529;-webkit-text-stroke:0.15px #fff;right:1648.00px;transform-origin:100% 0;transform:scaleX(1.0294);">1.976</span>
<span style="top:1099.20px;font-size:17px;color:#212529;-webkit-text-stroke:0.15px #fff;right:1417.00px;transform-origin:100% 0;transform:scaleX(1.0294);">3.008</span>
<span style="top:1099.20px;font-size:17px;color:#212529;-webkit-text-stroke:0.15px #fff;right:1187.00px;transform-origin:100% 0;transform:scaleX(1.0294);">3.220</span>
<span style="top:1099.20px;font-size:17px;color:#212529;-webkit-text-stroke:0.15px #fff;right:956.00px;transform-origin:100% 0;transform:scaleX(1.0294);">4.957</span>
<span style="top:1099.20px;font-size:17px;color:#212529;-webkit-text-stroke:0.15px #fff;right:726.00px;transform-origin:100% 0;transform:scaleX(1.0294);">6.026</span>
<span style="top:1099.20px;font-size:17px;color:#212529;-webkit-text-stroke:0.15px #fff;right:495.00px;transform-origin:100% 0;transform:scaleX(1.0294);">7.344</span>
<span style="top:1099.20px;font-size:17px;color:#212529;-webkit-text-stroke:0.15px #fff;right:265.00px;transform-origin:100% 0;transform:scaleX(1.0294);">2.358</span>
<span style="top:1099.20px;font-size:17px;color:#212529;-webkit-text-stroke:0.15px #fff;right:34.00px;transform-origin:100% 0;transform:scaleX(1.0294);">4.126</span>
<span style="top:1134.20px;font-size:17.3px;color:#212529;-webkit-text-stroke:0.2px #fff;left:83.90px;transform:scaleX(1.0731);">Totaal gbo&#x27;s</span>
<span style="top:1134.20px;font-size:17.3px;color:#212529;-webkit-text-stroke:0.2px #fff;left:440.00px;transform:scaleX(1.0757);">m²</span>
<span style="top:1134.20px;font-size:17px;color:#212529;-webkit-text-stroke:0.15px #f2f2f2;right:1648.00px;transform-origin:100% 0;transform:scaleX(1.0294);">1.680</span>
<span style="top:1134.20px;font-size:17px;color:#212529;-webkit-text-stroke:0.15px #f2f2f2;right:1417.00px;transform-origin:100% 0;transform:scaleX(1.0294);">2.560</span>
<span style="top:1134.20px;font-size:17px;color:#212529;-webkit-text-stroke:0.15px #f2f2f2;right:1187.00px;transform-origin:100% 0;transform:scaleX(1.0294);">2.310</span>
<span style="top:1134.20px;font-size:17px;color:#212529;-webkit-text-stroke:0.15px #f2f2f2;right:956.00px;transform-origin:100% 0;transform:scaleX(1.0294);">3.570</span>
<span style="top:1134.20px;font-size:17px;color:#212529;-webkit-text-stroke:0.15px #f2f2f2;right:726.00px;transform-origin:100% 0;transform:scaleX(1.0294);">4.340</span>
<span style="top:1134.20px;font-size:17px;color:#212529;-webkit-text-stroke:0.15px #f2f2f2;right:495.00px;transform-origin:100% 0;transform:scaleX(1.0294);">5.139</span>
<span style="top:1134.20px;font-size:17px;color:#212529;-webkit-text-stroke:0.15px #f2f2f2;right:265.00px;transform-origin:100% 0;transform:scaleX(1.0294);">1.650</span>
<span style="top:1134.20px;font-size:17px;color:#212529;-webkit-text-stroke:0.15px #f2f2f2;right:34.00px;transform-origin:100% 0;transform:scaleX(1.0294);">2.970</span>
<span style="top:1175.20px;font-size:17.3px;color:#212529;-webkit-text-stroke:0.2px #fff;left:83.90px;transform:scaleX(1.0404);">VON-prijs per m² GBO</span>
<span style="top:1175.20px;font-size:17.3px;color:#212529;-webkit-text-stroke:0.2px #fff;left:440.00px;transform:scaleX(1.1503);">€/m²gbo</span>
<div style="left:579px;top:1165px;width:178px;height:34px;border:1px solid #8f1d21;background:#fff"></div>
<span style="top:1175.20px;font-size:17px;color:#1f4e8c;-webkit-text-stroke:0.18px #fff;right:1651.50px;transform-origin:100% 0;transform:scaleX(1.0294);">5.700,00</span>
<div style="left:810px;top:1165px;width:178px;height:34px;border:1px solid #8f1d21;background:#fff"></div>
<span style="top:1175.20px;font-size:17px;color:#1f4e8c;-webkit-text-stroke:0.18px #fff;right:1420.50px;transform-origin:100% 0;transform:scaleX(1.0294);">5.747,00</span>
<div style="left:1040px;top:1165px;width:178px;height:34px;border:1px solid #8f1d21;background:#fff"></div>
<div style="left:1271px;top:1165px;width:178px;height:34px;border:1px solid #8f1d21;background:#fff"></div>
<span style="top:1175.20px;font-size:17px;color:#1f4e8c;-webkit-text-stroke:0.18px #fff;right:959.50px;transform-origin:100% 0;transform:scaleX(1.0294);">5.747,00</span>
<div style="left:1502px;top:1165px;width:177px;height:34px;border:1px solid #8f1d21;background:#fff"></div>
<span style="top:1175.20px;font-size:17px;color:#1f4e8c;-webkit-text-stroke:0.18px #fff;right:729.50px;transform-origin:100% 0;transform:scaleX(1.0294);">5.747,00</span>
<div style="left:1732px;top:1165px;width:178px;height:34px;border:1px solid #8f1d21;background:#fff"></div>
<div style="left:1962px;top:1165px;width:178px;height:34px;border:1px solid #8f1d21;background:#fff"></div>
<span style="top:1175.20px;font-size:17px;color:#1f4e8c;-webkit-text-stroke:0.18px #fff;right:268.50px;transform-origin:100% 0;transform:scaleX(1.0294);">4.957,00</span>
<div style="left:2193px;top:1165px;width:178px;height:34px;border:1px solid #8f1d21;background:#fff"></div>
<span style="top:1175.20px;font-size:17px;color:#1f4e8c;-webkit-text-stroke:0.18px #fff;right:37.50px;transform-origin:100% 0;transform:scaleX(1.0294);">5.074,00</span>
<span style="top:1216.20px;font-size:17.3px;color:#212529;-webkit-text-stroke:0.2px #fff;left:83.90px;transform:scaleX(1.0842);">VON-prijs per ehd / maandhuur/m²gbo</span>
<span style="top:1216.20px;font-size:17.3px;color:#212529;-webkit-text-stroke:0.2px #fff;left:440.00px;transform:scaleX(1.0393);">€</span>
<span style="top:1216.20px;font-size:17px;color:#212529;-webkit-text-stroke:0.15px #fff;right:1648.00px;transform-origin:100% 0;transform:scaleX(1.0294);">798.000</span>
<span style="top:1219.20px;font-size:13px;color:#212529;-webkit-text-stroke:0.12px #fff;left:758.80px;transform:scaleX(1.0472);">VON</span>
<span style="top:1216.20px;font-size:17px;color:#212529;-webkit-text-stroke:0.15px #fff;right:1417.00px;transform-origin:100% 0;transform:scaleX(1.0294);">919.520</span>
<span style="top:1219.20px;font-size:13px;color:#212529;-webkit-text-stroke:0.12px #fff;left:989.80px;transform:scaleX(1.0472);">VON</span>
<span style="top:1216.20px;font-size:17px;color:#212529;-webkit-text-stroke:0.15px #fff;right:1185.40px;transform-origin:100% 0;transform:scaleX(1.0294);">16,67</span>
<span style="top:1219.20px;font-size:13.5px;color:#212529;-webkit-text-stroke:0.12px #fff;left:1220.80px;transform:scaleX(1.1258);">/m²gbo</span>
<span style="top:1216.20px;font-size:17px;color:#212529;-webkit-text-stroke:0.15px #fff;right:956.00px;transform-origin:100% 0;transform:scaleX(1.0294);">603.435</span>
<span style="top:1219.20px;font-size:13px;color:#212529;-webkit-text-stroke:0.12px #fff;left:1450.80px;transform:scaleX(1.0472);">VON</span>
<span style="top:1216.20px;font-size:17px;color:#212529;-webkit-text-stroke:0.15px #fff;right:726.00px;transform-origin:100% 0;transform:scaleX(1.0294);">804.580</span>
<span style="top:1219.20px;font-size:13px;color:#212529;-webkit-text-stroke:0.12px #fff;left:1680.80px;transform:scaleX(1.0472);">VON</span>
<span style="top:1216.20px;font-size:17px;color:#212529;-webkit-text-stroke:0.15px #fff;right:493.40px;transform-origin:100% 0;transform:scaleX(1.0294);">16,90</span>
<span style="top:1219.20px;font-size:13.5px;color:#212529;-webkit-text-stroke:0.12px #fff;left:1912.80px;transform:scaleX(1.1258);">/m²gbo</span>
<span style="top:1216.20px;font-size:17px;color:#212529;-webkit-text-stroke:0.15px #fff;right:265.00px;transform-origin:100% 0;transform:scaleX(1.0294);">272.635</span>
<span style="top:1219.20px;font-size:13px;color:#212529;-webkit-text-stroke:0.12px #fff;left:2141.80px;transform:scaleX(1.0472);">VON</span>
<span style="top:1216.20px;font-size:17px;color:#212529;-webkit-text-stroke:0.15px #fff;right:34.00px;transform-origin:100% 0;transform:scaleX(1.0294);">279.070</span>
<span style="top:1219.20px;font-size:13px;color:#212529;-webkit-text-stroke:0.12px #fff;left:2372.80px;transform:scaleX(1.0472);">VON</span>
<span style="top:1256.20px;font-size:17.3px;color:#212529;-webkit-text-stroke:0.2px #fff;left:83.90px;transform:scaleX(1.0385);">Huurprijs / ehd/mnd (btw nvt) (won &amp; P)</span>
<span style="top:1256.20px;font-size:17.3px;color:#212529;-webkit-text-stroke:0.2px #fff;left:440.00px;transform:scaleX(1.1231);">€/mnd</span>
<div style="left:579px;top:1247px;width:178px;height:34px;border:1px solid #8f1d21;background:#fff"></div>
<div style="left:810px;top:1247px;width:178px;height:34px;border:1px solid #8f1d21;background:#fff"></div>
<div style="left:1040px;top:1247px;width:178px;height:34px;border:1px solid #8f1d21;background:#fff"></div>
<span style="top:1257.20px;font-size:17px;color:#1f4e8c;-webkit-text-stroke:0.18px #fff;right:1190.50px;transform-origin:100% 0;transform:scaleX(1.0294);">1.100,00</span>
<div style="left:1271px;top:1247px;width:178px;height:34px;border:1px solid #8f1d21;background:#fff"></div>
<div style="left:1502px;top:1247px;width:177px;height:34px;border:1px solid #8f1d21;background:#fff"></div>
<div style="left:1732px;top:1247px;width:178px;height:34px;border:1px solid #8f1d21;background:#fff"></div>
<span style="top:1257.20px;font-size:17px;color:#1f4e8c;-webkit-text-stroke:0.18px #fff;right:498.50px;transform-origin:100% 0;transform:scaleX(1.0294);">965,00</span>
<div style="left:1962px;top:1247px;width:178px;height:34px;border:1px solid #8f1d21;background:#fff"></div>
<div style="left:2193px;top:1247px;width:178px;height:34px;border:1px solid #8f1d21;background:#fff"></div>
<span style="top:1297.20px;font-size:17.3px;color:#212529;-webkit-text-stroke:0.2px #fff;left:83.90px;transform:scaleX(1.0519);">Huurprijs / m²GBO/jr ex btw (bog)</span>
<span style="top:1297.20px;font-size:17.3px;color:#212529;-webkit-text-stroke:0.2px #fff;left:440.00px;transform:scaleX(1.1318);">€/jr</span>
<div style="left:579px;top:1288px;width:178px;height:33px;border:1px solid #8f1d21;background:#fff"></div>
<div style="left:810px;top:1288px;width:178px;height:33px;border:1px solid #8f1d21;background:#fff"></div>
<div style="left:1040px;top:1288px;width:178px;height:33px;border:1px solid #8f1d21;background:#fff"></div>
<div style="left:1271px;top:1288px;width:178px;height:33px;border:1px solid #8f1d21;background:#fff"></div>
<div style="left:1502px;top:1288px;width:177px;height:33px;border:1px solid #8f1d21;background:#fff"></div>
<div style="left:1732px;top:1288px;width:178px;height:33px;border:1px solid #8f1d21;background:#fff"></div>
<div style="left:1962px;top:1288px;width:178px;height:33px;border:1px solid #8f1d21;background:#fff"></div>
<div style="left:2193px;top:1288px;width:178px;height:33px;border:1px solid #8f1d21;background:#fff"></div>
<span style="top:1338.20px;font-size:17.3px;color:#212529;-webkit-text-stroke:0.2px #fff;left:83.90px;transform:scaleX(1.0120);">BAR</span>
<span style="top:1338.20px;font-size:17.3px;color:#212529;-webkit-text-stroke:0.2px #fff;left:440.00px;transform:scaleX(0.9426);">%</span>
<div style="left:579px;top:1328px;width:178px;height:34px;border:1px solid #8f1d21;background:#fff"></div>
<div style="left:810px;top:1328px;width:178px;height:34px;border:1px solid #8f1d21;background:#fff"></div>
<div style="left:1040px;top:1328px;width:178px;height:34px;border:1px solid #8f1d21;background:#fff"></div>
<span style="top:1338.20px;font-size:17px;color:#1f4e8c;-webkit-text-stroke:0.18px #fff;right:1190.50px;transform-origin:100% 0;transform:scaleX(1.0294);">4,000</span>
<div style="left:1271px;top:1328px;width:178px;height:34px;border:1px solid #8f1d21;background:#fff"></div>
<div style="left:1502px;top:1328px;width:177px;height:34px;border:1px solid #8f1d21;background:#fff"></div>
<div style="left:1732px;top:1328px;width:178px;height:34px;border:1px solid #8f1d21;background:#fff"></div>
<span style="top:1338.20px;font-size:17px;color:#1f4e8c;-webkit-text-stroke:0.18px #fff;right:498.50px;transform-origin:100% 0;transform:scaleX(1.0294);">3,600</span>
<div style="left:1962px;top:1328px;width:178px;height:34px;border:1px solid #8f1d21;background:#fff"></div>
<div style="left:2193px;top:1328px;width:178px;height:34px;border:1px solid #8f1d21;background:#fff"></div>
<span style="top:1379.20px;font-size:17.3px;color:#212529;-webkit-text-stroke:0.2px #fff;left:83.90px;transform:scaleX(1.0786);">Beleggingswaarde per ehd</span>
<span style="top:1379.20px;font-size:17.3px;color:#212529;-webkit-text-stroke:0.2px #fff;left:440.00px;transform:scaleX(1.0393);">€</span>
<span style="top:1379.20px;font-size:17px;color:#212529;-webkit-text-stroke:0.15px #fff;right:1187.00px;transform-origin:100% 0;transform:scaleX(1.0294);">330.000</span>
<span style="top:1379.20px;font-size:17px;color:#212529;-webkit-text-stroke:0.15px #fff;right:495.00px;transform-origin:100% 0;transform:scaleX(1.0294);">321.667</span>
<div style="left:1446px;top:1337px;width:1px;height:19px;background:#1f3b66;"></div>
<div style="left:1802px;top:0px;width:3px;height:1px;background:#555;"></div>
<div style="left:1818px;top:0px;width:3px;height:1px;background:#555;"></div>
<div style="left:1826px;top:0px;width:7px;height:1px;background:#444;"></div>
<div style="left:1852px;top:0px;width:3px;height:1px;background:#555;"></div>
<div style="left:1868px;top:0px;width:3px;height:1px;background:#555;"></div>
<div style="left:1878px;top:0px;width:10px;height:1px;background:#333;"></div>
<div style="left:1880px;top:0px;width:6px;height:2px;background:#888;"></div>
<div style="left:1900px;top:0px;width:8px;height:1px;background:#333;"></div>
<div style="left:1902px;top:0px;width:4px;height:2px;background:#999;"></div>
<div style="left:1919px;top:0px;width:3px;height:1px;background:#555;"></div>
<div style="left:1933px;top:0px;width:3px;height:1px;background:#555;"></div>
<div style="left:1944px;top:0px;width:3px;height:1px;background:#555;"></div>
<div style="left:1966px;top:0px;width:4px;height:2px;background:#333;"></div>
<div style="left:1965px;top:0px;width:3px;height:3px;background:#555;"></div>
<div style="left:1974px;top:0px;width:3px;height:1px;background:#555;"></div>
<div style="left:1979px;top:0px;width:3px;height:1px;background:#555;"></div>
<div style="left:1984px;top:0px;width:3px;height:1px;background:#555;"></div>
<div style="left:1989px;top:0px;width:2px;height:1px;background:#666;"></div>
<svg style="left:0;top:1393px" width="26" height="7" viewBox="0 0 26 7"><path d="M1 7 L5.5 2.2 L10 7z M13.5 7 L18 2.2 L22.5 7z" fill="#4682b4"/></svg>
</div></body></html>
